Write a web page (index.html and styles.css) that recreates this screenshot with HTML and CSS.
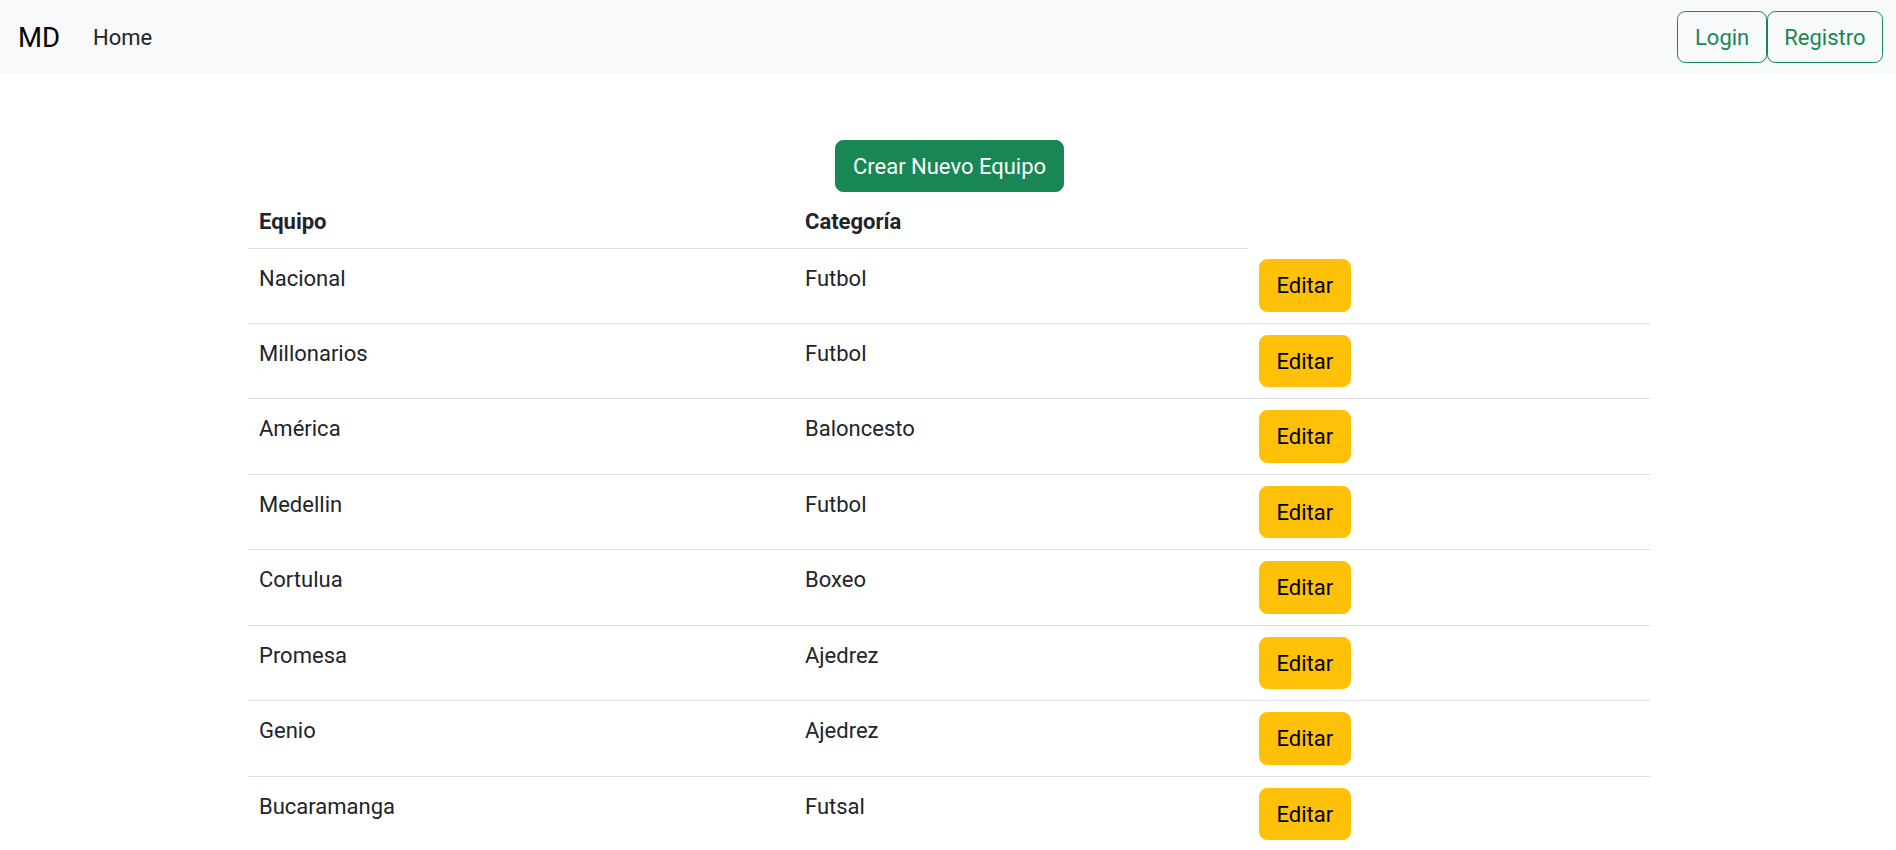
FILE: index.html
```html
<!DOCTYPE html>
<html lang="es">
<head>
<meta charset="utf-8">
<title>Equipos</title>
<link rel="stylesheet" href="styles.css">
</head>
<body>
<nav class="navbar">
  <div class="nav-left">
    <a class="brand" href="#">MD</a>
    <a class="nav-link" href="#">Home</a>
  </div>
  <div class="nav-right">
    <button class="btn btn-outline">Login</button><button class="btn btn-outline">Registro</button>
  </div>
</nav>
<main class="content">
  <div class="actions">
    <button class="btn btn-success">Crear Nuevo Equipo</button>
  </div>
  <table class="teams">
    <colgroup>
      <col class="col-team">
      <col class="col-cat">
      <col class="col-act">
    </colgroup>
    <thead>
      <tr><th>Equipo</th><th>Categoría</th></tr>
    </thead>
    <tbody>
      <tr><td>Nacional</td><td>Futbol</td><td class="cell-action"><button class="btn btn-warning">Editar</button></td></tr>
      <tr><td>Millonarios</td><td>Futbol</td><td class="cell-action"><button class="btn btn-warning">Editar</button></td></tr>
      <tr><td>América</td><td>Baloncesto</td><td class="cell-action"><button class="btn btn-warning">Editar</button></td></tr>
      <tr><td>Medellin</td><td>Futbol</td><td class="cell-action"><button class="btn btn-warning">Editar</button></td></tr>
      <tr><td>Cortulua</td><td>Boxeo</td><td class="cell-action"><button class="btn btn-warning">Editar</button></td></tr>
      <tr><td>Promesa</td><td>Ajedrez</td><td class="cell-action"><button class="btn btn-warning">Editar</button></td></tr>
      <tr><td>Genio</td><td>Ajedrez</td><td class="cell-action"><button class="btn btn-warning">Editar</button></td></tr>
      <tr><td>Bucaramanga</td><td>Futsal</td><td class="cell-action"><button class="btn btn-warning">Editar</button></td></tr>
    </tbody>
  </table>
</main>
</body>
</html>
```
FILE: styles.css
```css
* { box-sizing: border-box; }

body {
  margin: 0;
  font-family: Roboto, "Liberation Sans", sans-serif;
  font-size: 22px;
  line-height: 1.5;
  color: #212529;
  background: #fff;
}

.navbar {
  height: 74px;
  background: #f8f9fa;
  display: flex;
  align-items: center;
  justify-content: space-between;
  padding: 0 13px 0 18px;
}

.nav-left {
  display: flex;
  align-items: center;
}

.brand {
  font-size: 27.5px;
  line-height: 41px;
  color: #000;
  text-decoration: none;
  margin-right: 22px;
}

.nav-link {
  padding: 0 11px;
  line-height: 33px;
  color: #212529;
  text-decoration: none;
}

.nav-right {
  display: flex;
}

.btn {
  font-family: inherit;
  font-size: 22px;
  line-height: 33px;
  padding: 8.5px 16.5px;
  border: 1px solid transparent;
  border-radius: 8.25px;
  cursor: pointer;
  display: inline-block;
}

.btn-outline {
  background: transparent;
  color: #198754;
  border-color: #198754;
}

.btn-success {
  background: #198754;
  border-color: #198754;
  color: #fff;
}

.btn-warning {
  background: #ffc107;
  border-color: #ffc107;
  color: #000;
  padding: 8.75px 16.5px;
}

.content {
  margin-top: 66px;
  padding-left: 3px;
}

.actions {
  display: flex;
  justify-content: center;
}

.teams {
  width: 1403px;
  margin: 0 auto;
  border-collapse: collapse;
  table-layout: fixed;
}

.col-team { width: 546px; }
.col-cat { width: 454px; }
.col-act { width: 403px; }

.teams th,
.teams td {
  padding: 12.6px 11px 9.4px;
  text-align: left;
  vertical-align: top;
  border-bottom: 1px solid #dee2e6;
}

.teams th {
  font-weight: 700;
  padding-bottom: 10.4px;
}

.teams td.cell-action {
  padding: 11px;
}
```
